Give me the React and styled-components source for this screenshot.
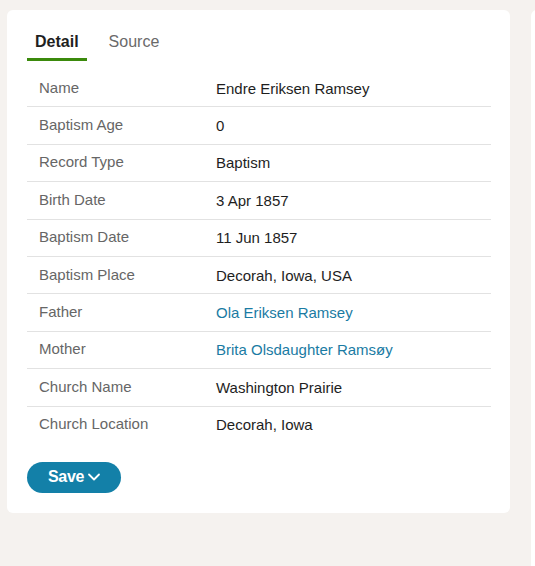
import React from "react";
import styled, { createGlobalStyle } from "styled-components";

const Global = createGlobalStyle`
  html, body { margin: 0; padding: 0; background: #f5f2ef; overflow: hidden; }
  body { font-family: "Liberation Sans", Arial, sans-serif; }
  * { box-sizing: border-box; }
`;

const Page = styled.div`
  display: flex;
  gap: 21px;
  padding: 10px 0 0 7px;
  width: 535px;
  height: 566px;
  overflow: hidden;
`;

const Card = styled.div`
  flex: 0 0 503px;
  height: 503px;
  background: #fff;
  border-radius: 6px;
  padding: 22px 19px 20px 20px;
`;

const SideCard = styled.div`
  flex: 0 0 300px;
  background: #fff;
  border-radius: 6px 6px 0 0;
`;

const Tabs = styled.div`
  display: flex;
  gap: 14px;
`;

const Tab = styled.div`
  padding: 0 8px 6px;
  font-size: 16px;
  line-height: 20px;
  color: ${(p) => (p.$active ? "#1f1f1f" : "#6a6a6a")};
  font-weight: ${(p) => (p.$active ? 700 : 400)};
  border-bottom: 3px solid ${(p) => (p.$active ? "#3b8a0c" : "transparent")};
`;

const Table = styled.div`
  margin-top: 9px;
  display: flex;
  flex-direction: column;
`;

const Row = styled.div`
  display: grid;
  grid-template-columns: 177px 1fr;
  align-items: center;
  height: 37.4px;
  padding: 0 12px;
  border-bottom: 1px solid ${(p) => (p.$last ? "transparent" : "#e2e2e2")};
  font-size: 15px;
`;

const Label = styled.div`
  color: #666;
  margin-top: -2px;
`;

const Value = styled.div`
  color: ${(p) => (p.$link ? "#1a7ba3" : "#1e1e1e")};
`;

const SaveButton = styled.button`
  margin-top: 18px;
  display: inline-flex;
  align-items: center;
  gap: 3px;
  height: 31px;
  padding: 0 20px 0 21px;
  border: none;
  border-radius: 16px;
  background: #1380a8;
  color: #fff;
  font-family: "Liberation Sans", Arial, sans-serif;
  font-size: 16px;
  font-weight: 700;
  letter-spacing: -0.3px;
`;

const rows = [
  ["Name", "Endre Eriksen Ramsey"],
  ["Baptism Age", "0"],
  ["Record Type", "Baptism"],
  ["Birth Date", "3 Apr 1857"],
  ["Baptism Date", "11 Jun 1857"],
  ["Baptism Place", "Decorah, Iowa, USA"],
  ["Father", "Ola Eriksen Ramsey", true],
  ["Mother", "Brita Olsdaughter Ramsøy", true],
  ["Church Name", "Washington Prairie"],
  ["Church Location", "Decorah, Iowa"],
];

export default function App() {
  return (
    <>
      <Global />
      <Page>
        <Card>
          <Tabs>
            <Tab $active>Detail</Tab>
            <Tab>Source</Tab>
          </Tabs>
          <Table>
            {rows.map(([l, v, link], i) => (
              <Row key={l} $last={i === rows.length - 1}>
                <Label>{l}</Label>
                <Value $link={link}>{v}</Value>
              </Row>
            ))}
          </Table>
          <SaveButton>
            Save
            <svg width="14" height="14" viewBox="0 0 14 14" fill="none">
              <path d="M2 4.5 L7 9.5 L12 4.5" stroke="#fff" strokeWidth="1.8" strokeLinecap="round" strokeLinejoin="round" />
            </svg>
          </SaveButton>
        </Card>
        <SideCard />
      </Page>
    </>
  );
}
